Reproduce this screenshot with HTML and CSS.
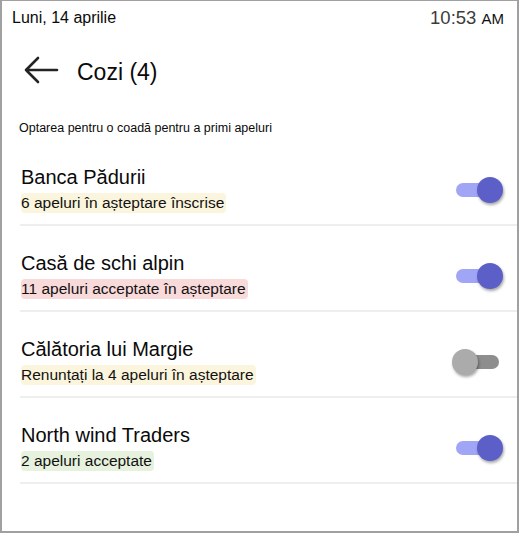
FILE: index.html
```html
<!DOCTYPE html>
<html lang="ro">
<head>
	<meta charset="UTF-8">
	<meta name="viewport" content="width=device-width, initial-scale=1.0">
	<title>Cozi</title>
	<link rel="stylesheet" href="styles.css">
</head>
<body>
	<div id="screen">
		<div class="status">
			<span class="date">Luni, 14 aprilie</span>
			<span class="clock">10:53 <small>AM</small></span>
		</div>

		<div class="header">
			<svg class="back" width="36" height="30" viewBox="0 0 36 30">
				<path d="M34 15H3M15 3L3 15l12 12" fill="none" stroke="#242424" stroke-width="2.6" stroke-linecap="round" stroke-linejoin="round"/>
			</svg>
			<h1>Cozi (4)</h1>
		</div>

		<p class="hint">Optarea pentru o coadă pentru a primi apeluri</p>

		<ul class="queues">
			<li class="queue">
				<div class="info">
					<div class="name">Banca Pădurii</div>
					<div class="sub yellow">6 apeluri în așteptare înscrise</div>
				</div>
				<div class="switch on"><span class="knob"></span></div>
			</li>
			<li class="queue">
				<div class="info">
					<div class="name">Casă de schi alpin</div>
					<div class="sub red">11 apeluri acceptate în așteptare</div>
				</div>
				<div class="switch on"><span class="knob"></span></div>
			</li>
			<li class="queue">
				<div class="info">
					<div class="name">Călătoria lui Margie</div>
					<div class="sub yellow">Renunțați la 4 apeluri în așteptare</div>
				</div>
				<div class="switch"><span class="knob"></span></div>
			</li>
			<li class="queue">
				<div class="info">
					<div class="name">North wind Traders</div>
					<div class="sub green">2 apeluri acceptate</div>
				</div>
				<div class="switch on"><span class="knob"></span></div>
			</li>
		</ul>
	</div>
</body>
</html>
```

FILE: styles.css
```css
body {
  margin: 0;
  background: #fff;
}

#screen {
  width: 519px;
  height: 533px;
  box-sizing: border-box;
  border: 2px solid #a0a0a0;
  border-top-width: 1px;
  font-family: "Liberation Sans", Arial, sans-serif;
  color: #0a0a0a;
  overflow: hidden;
}

.status {
  display: flex;
  justify-content: space-between;
  align-items: center;
  height: 33px;
  padding: 0 13px 0 10px;
}
.date {
  font-size: 16px;
}
.clock {
  font-size: 18.5px;
  color: #3c3c3c;
}
.clock small {
  font-size: 15px;
  color: #111;
}

.header {
  display: flex;
  align-items: center;
  gap: 18px;
  height: 72px;
  padding-left: 21px;
}
.header h1 {
  margin: 0;
  font-size: 23px;
  font-weight: normal;
  padding-top: 4px;
}

.hint {
  margin: 14px 0 0 17px;
  font-size: 12.5px;
  line-height: 16px;
}

.queues {
  list-style: none;
  margin: 0;
  padding: 0;
  margin-top: 4px;
}

.queue {
  display: flex;
  align-items: center;
  justify-content: space-between;
  margin-left: 18px;
  padding: 25px 18px 12px 1px;
  border-bottom: 2px solid #eeeeee;
  height: 47px;
}

.name {
  font-size: 20px;
  line-height: 24px;
}
.sub {
  display: inline-block;
  margin-top: 4px;
  font-size: 15.5px;
  line-height: 20px;
  padding-right: 2px;
  border-radius: 4px;
  color: #111;
}
.yellow { background: #fcf5dd; }
.red { background: #f9dadb; }
.green { background: #e7f2de; }

.switch {
  position: relative;
  width: 43px;
  height: 14px;
  border-radius: 7px;
  background: #8e8e8e;
  margin-top: 2px;
}
.switch.on {
  background: #a0a6f5;
}
.knob {
  position: absolute;
  top: -6px;
  left: -4px;
  width: 26px;
  height: 26px;
  border-radius: 50%;
  background: #ababab;
  box-shadow: 1px 2px 3px rgba(0, 0, 0, 0.35);
}
.switch.on .knob {
  left: auto;
  right: -4px;
  background: #5b5fc7;
}
```
